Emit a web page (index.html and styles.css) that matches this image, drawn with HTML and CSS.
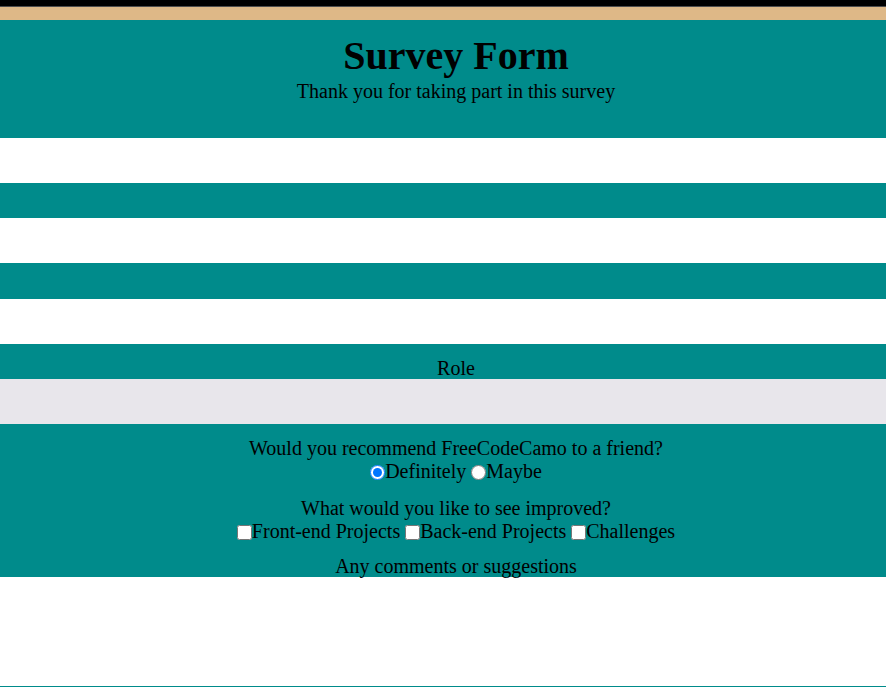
FILE: index.html
```html
<!DOCTYPE html>
<html lang="en">
<head>
<meta charset="utf-8">
<title>Survey Form</title>
<link rel="stylesheet" href="styles.css">
</head>
<body>
<div class="topbar"></div>
<div class="rule"></div>
<div class="tanbar"></div>
<header class="header">
  <h1 class="title">Survey Form</h1>
  <p class="subtitle">Thank you for taking part in this survey</p>
</header>
<form class="form">
  <input class="field" type="text" aria-label="Name">
  <label class="lbl lbl-a"></label>
  <input class="field" type="email" aria-label="Email">
  <label class="lbl lbl-b"></label>
  <input class="field" type="number" aria-label="Age">
  <label class="lbl lbl-a">Role</label>
  <select class="field select" aria-label="Role"></select>
  <div class="choices">
    <p class="q">Would you recommend FreeCodeCamo to a friend?</p>
    <div class="row"><input class="tick" type="radio" name="rec" checked><label>Definitely</label> <input class="tick" type="radio" name="rec"><label>Maybe</label></div>
    <p class="q q2">What would you like to see improved?</p>
    <div class="row"><input class="tick" type="checkbox"><label>Front-end Projects</label> <input class="tick" type="checkbox"><label>Back-end Projects</label> <input class="tick" type="checkbox"><label>Challenges</label></div>
    <p class="q q3">Any comments or suggestions</p>
  </div>
  <textarea class="comments" aria-label="Comments"></textarea>
</form>
</body>
</html>
```
FILE: styles.css
```css
* { box-sizing: border-box; }
html, body { margin: 0; padding: 0; }
body {
  background: #008b8b;
  font-family: "Liberation Serif", "Times New Roman", serif;
  font-size: 20px;
  color: #000;
}
.topbar { height: 6px; background: #000; }
.rule { height: 1px; background: #4d4d4d; }
.tanbar { height: 13px; background: #deb887; }
.header {
  height: 118px;
  padding: 13px 0 0 26px;
  text-align: center;
  background: #008b8b;
}
.title {
  margin: 0;
  font-size: 40px;
  line-height: 46px;
  font-weight: bold;
}
.subtitle {
  margin: 0;
  font-size: 20px;
  line-height: 23px;
  position: relative;
  top: 1px;
}
.form { display: block; }
.field {
  display: block;
  width: 100%;
  height: 45px;
  margin: 0;
  border: none;
  background: #fff;
  outline: none;
}
.select {
  background: #e8e6eb;
  appearance: none;
}
.lbl {
  display: block;
  height: 35px;
  padding: 13px 0 0 26px;
  line-height: 22px;
  text-align: center;
}
.lbl-b { height: 36px; }
.choices {
  height: 153px;
  padding: 13px 0 0 26px;
  text-align: center;
}
.q { margin: 0; line-height: 23px; }
.q2 { margin-top: 14px; }
.q3 { margin-top: 12px; }
.row { line-height: 23px; height: 23px; }
.tick {
  width: 15px;
  height: 15px;
  margin: 0;
  vertical-align: -2px;
}
.comments {
  display: block;
  width: 100%;
  height: 109px;
  margin: 0;
  border: none;
  resize: none;
  background: #fff;
  outline: none;
}
```
